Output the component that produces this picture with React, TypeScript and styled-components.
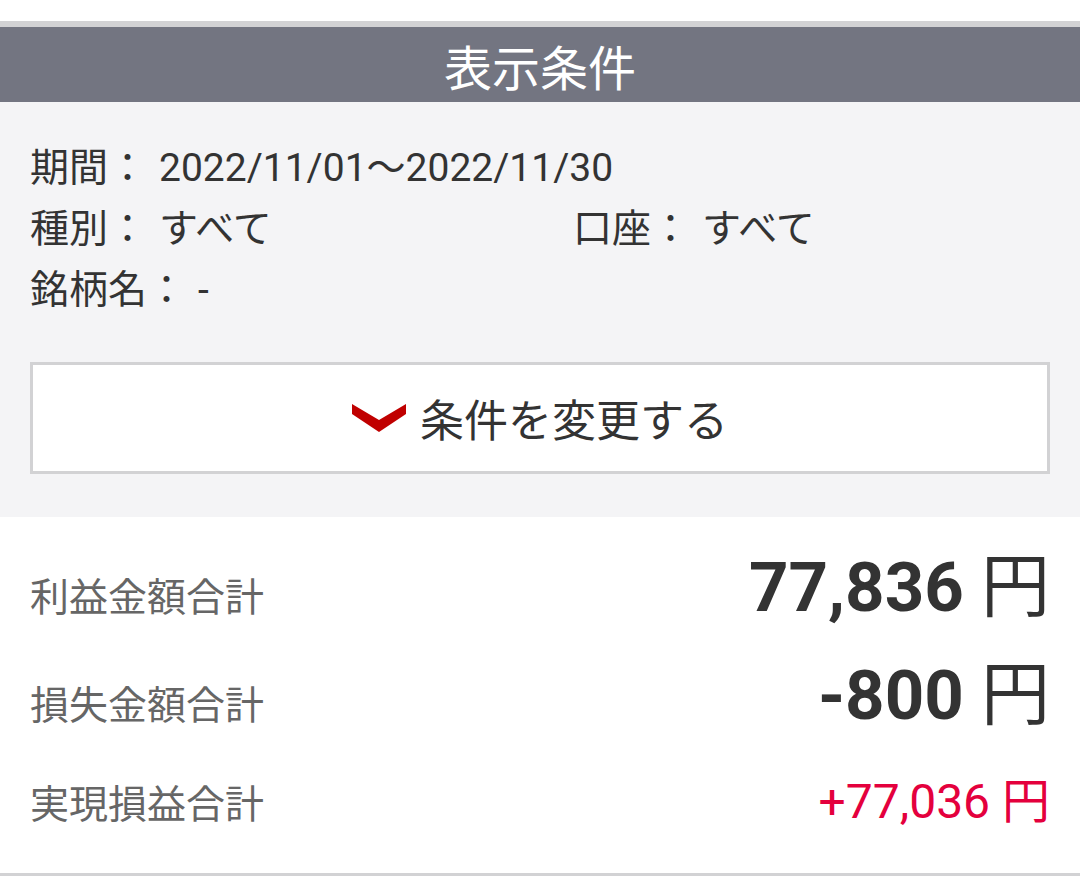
import React from 'react';
import styled, { createGlobalStyle } from 'styled-components';

const GlobalStyle = createGlobalStyle`
  html, body {
    margin: 0;
    padding: 0;
    background: #ffffff;
  }
  body {
    font-family: Roboto, "Noto Sans CJK JP", sans-serif;
    color: #333333;
  }
`;

// 画面全体
const Page = styled.div`
  width: 1080px;
  padding-top: 21px;
`;

// 表示条件のタイトルバー
const TitleBar = styled.div`
  border-top: 6px solid #d2d2d4;
  height: 75px;
  background: #737581;
  color: #ffffff;
  display: flex;
  align-items: center;
  justify-content: center;
  font-size: 48px;
`;

// 条件パネル
const ConditionPanel = styled.div`
  background: #f4f4f6;
  padding: 36px 30px 43px;
`;

const ConditionGrid = styled.div`
  display: grid;
  grid-template-columns: 543px 1fr;
  font-size: 39px;
  line-height: 61px;
  color: #333333;
`;

const ConditionItem = styled.div<{ $wide?: boolean }>`
  display: flex;
  white-space: nowrap;
  grid-column: ${(p) => (p.$wide ? '1 / span 2' : 'auto')};
`;

const ConditionValue = styled.span`
  margin-left: 12px;
`;

const ChangeButton = styled.button`
  margin-top: 41px;
  width: 100%;
  height: 112px;
  box-sizing: border-box;
  border: 3px solid #d2d2d4;
  background: #ffffff;
  display: flex;
  align-items: center;
  justify-content: center;
  gap: 14px;
  font-family: inherit;
  font-size: 44px;
  color: #333333;
  cursor: pointer;
`;

// 合計金額
const Totals = styled.div`
  padding: 18px 30px 20px;
  border-bottom: 3px solid #d2d2d4;
`;

// ラベルと金額は下端(ベースライン)で揃える
const TotalRow = styled.div<{ $pad: number }>`
  height: 106px;
  box-sizing: border-box;
  padding-top: ${(p) => p.$pad}px;
  display: flex;
  align-items: baseline;
  justify-content: space-between;
`;

const TotalLabel = styled.span`
  font-size: 39px;
  color: #666666;
`;

const TotalValue = styled.span<{ $size: number; $bold?: boolean; $color: string }>`
  font-size: ${(p) => p.$size}px;
  line-height: 1.17;
  font-weight: ${(p) => (p.$bold ? 700 : 400)};
  color: ${(p) => p.$color};
  white-space: nowrap;
`;

const Yen = styled.span`
  font-weight: 400;
`;

function Chevron() {
  return (
    <svg width="54" height="28" viewBox="0 0 54 28">
      <polygon points="0,0 27,16 54,0 54,10 27,28 0,10" fill="#c00000" />
    </svg>
  );
}

const conditions = [
  { label: '期間：', value: '2022/11/01～2022/11/30', wide: true },
  { label: '種別：', value: 'すべて' },
  { label: '口座：', value: 'すべて' },
  { label: '銘柄名：', value: '-', wide: true },
];

const totals = [
  { label: '利益金額合計', value: '77,836', size: 69, bold: true, color: '#333333', pad: 13 },
  { label: '損失金額合計', value: '-800', size: 69, bold: true, color: '#333333', pad: 15 },
  { label: '実現損益合計', value: '+77,036', size: 48, bold: false, color: '#e4003d', pad: 26 },
];

export default function App() {
  return (
    <>
      <GlobalStyle />
      <Page>
        <TitleBar>表示条件</TitleBar>
        <ConditionPanel>
          <ConditionGrid>
            {conditions.map((c) => (
              <ConditionItem key={c.label} $wide={c.wide}>
                <span>{c.label}</span>
                <ConditionValue>{c.value}</ConditionValue>
              </ConditionItem>
            ))}
          </ConditionGrid>
          <ChangeButton>
            <Chevron />
            条件を変更する
          </ChangeButton>
        </ConditionPanel>
        <Totals>
          {totals.map((t) => (
            <TotalRow key={t.label} $pad={t.pad}>
              <TotalLabel>{t.label}</TotalLabel>
              <TotalValue $size={t.size} $bold={t.bold} $color={t.color}>
                {t.value} <Yen>円</Yen>
              </TotalValue>
            </TotalRow>
          ))}
        </Totals>
      </Page>
    </>
  );
}
